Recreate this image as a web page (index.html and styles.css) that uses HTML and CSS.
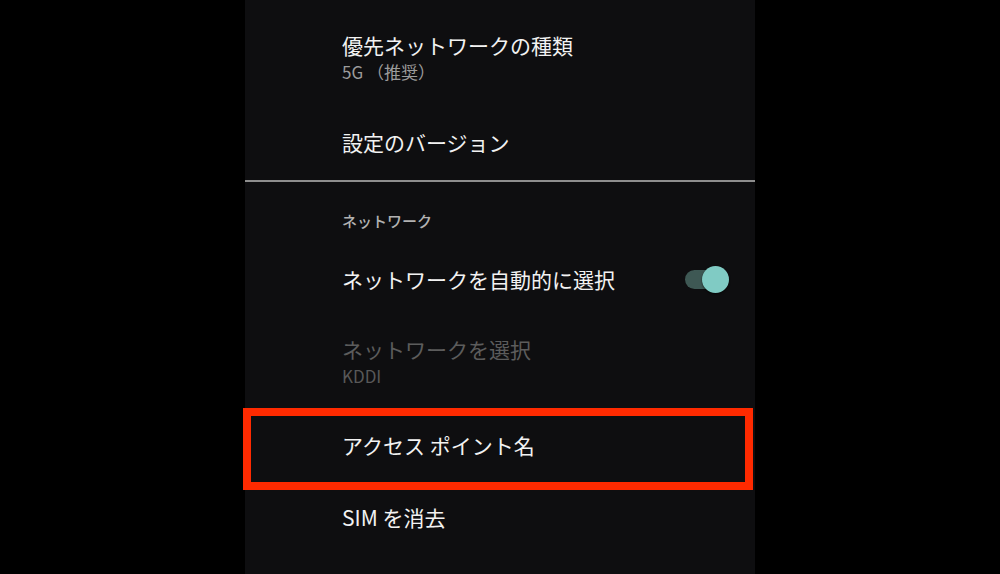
FILE: index.html
```html
<!DOCTYPE html>
<html lang="ja">
<head>
<meta charset="utf-8">
<link rel="stylesheet" href="styles.css">
</head>
<body>
<div class="screen">
  <div class="panel">
    <div class="row row-first">
      <div class="title">優先ネットワークの種類</div>
      <div class="summary">5G （推奨）</div>
    </div>
    <div class="row row-single">
      <div class="title">設定のバージョン</div>
    </div>
    <div class="divider"></div>
    <div class="category">ネットワーク</div>
    <div class="row row-single row-switch">
      <div class="title">ネットワークを自動的に選択</div>
      <div class="switch"><span class="track"></span><span class="thumb"></span></div>
    </div>
    <div class="row row-double disabled">
      <div class="title">ネットワークを選択</div>
      <div class="summary">KDDI</div>
    </div>
    <div class="row row-single">
      <div class="title">アクセス ポイント名</div>
    </div>
    <div class="row row-single">
      <div class="title">SIM を消去</div>
    </div>
    <div class="highlight"></div>
  </div>
</div>
</body>
</html>
```

FILE: styles.css
```css
html, body {
  margin: 0;
  padding: 0;
  background: #000;
}
body {
  font-family: "Noto Sans CJK JP", "Noto Sans", sans-serif;
}
.screen {
  width: 1000px;
  height: 574px;
  display: flex;
  justify-content: center;
  overflow: hidden;
  background: #000;
}
.panel {
  position: relative;
  width: 510px;
  height: 574px;
  background: #0e0e10;
  display: flex;
  flex-direction: column;
}
.row {
  box-sizing: border-box;
  padding-left: 97px;
  display: flex;
  flex-direction: column;
}
.title {
  font-size: 21px;
  line-height: 28px;
  color: #f2f2f2;
}
.summary {
  font-size: 17px;
  line-height: 26px;
  color: #9c9c9c;
}
.row-first {
  height: 108px;
  padding-top: 31px;
}
.row-single {
  height: 72px;
  justify-content: center;
  padding-bottom: 4px;
}
.row-switch {
  flex-direction: row;
  align-items: center;
  justify-content: space-between;
  padding-right: 26px;
  padding-bottom: 2px;
}
.row-double {
  height: 95px;
  padding-top: 19px;
}
.disabled .title {
  color: #5c5c5c;
}
.disabled .summary {
  color: #585858;
}
.divider {
  height: 2px;
  background: #8e8e8e;
}
.category {
  box-sizing: border-box;
  height: 62px;
  padding: 27px 0 0 97px;
  font-size: 15px;
  line-height: 24px;
  font-weight: 500;
  color: #b2b2b2;
}
.switch {
  position: relative;
  width: 44px;
  height: 27px;
}
.track {
  position: absolute;
  left: 0;
  top: 4px;
  width: 36px;
  height: 19px;
  border-radius: 10px;
  background: #3e5854;
}
.thumb {
  position: absolute;
  right: 0;
  top: 0;
  width: 27px;
  height: 27px;
  border-radius: 50%;
  background: #80cbc4;
  box-shadow: 0 1px 2px rgba(0,0,0,0.6);
}
.highlight {
  position: absolute;
  left: -2px;
  top: 408px;
  width: 510px;
  height: 82px;
  box-sizing: border-box;
  border: 8px solid #ff2a00;
}
```
